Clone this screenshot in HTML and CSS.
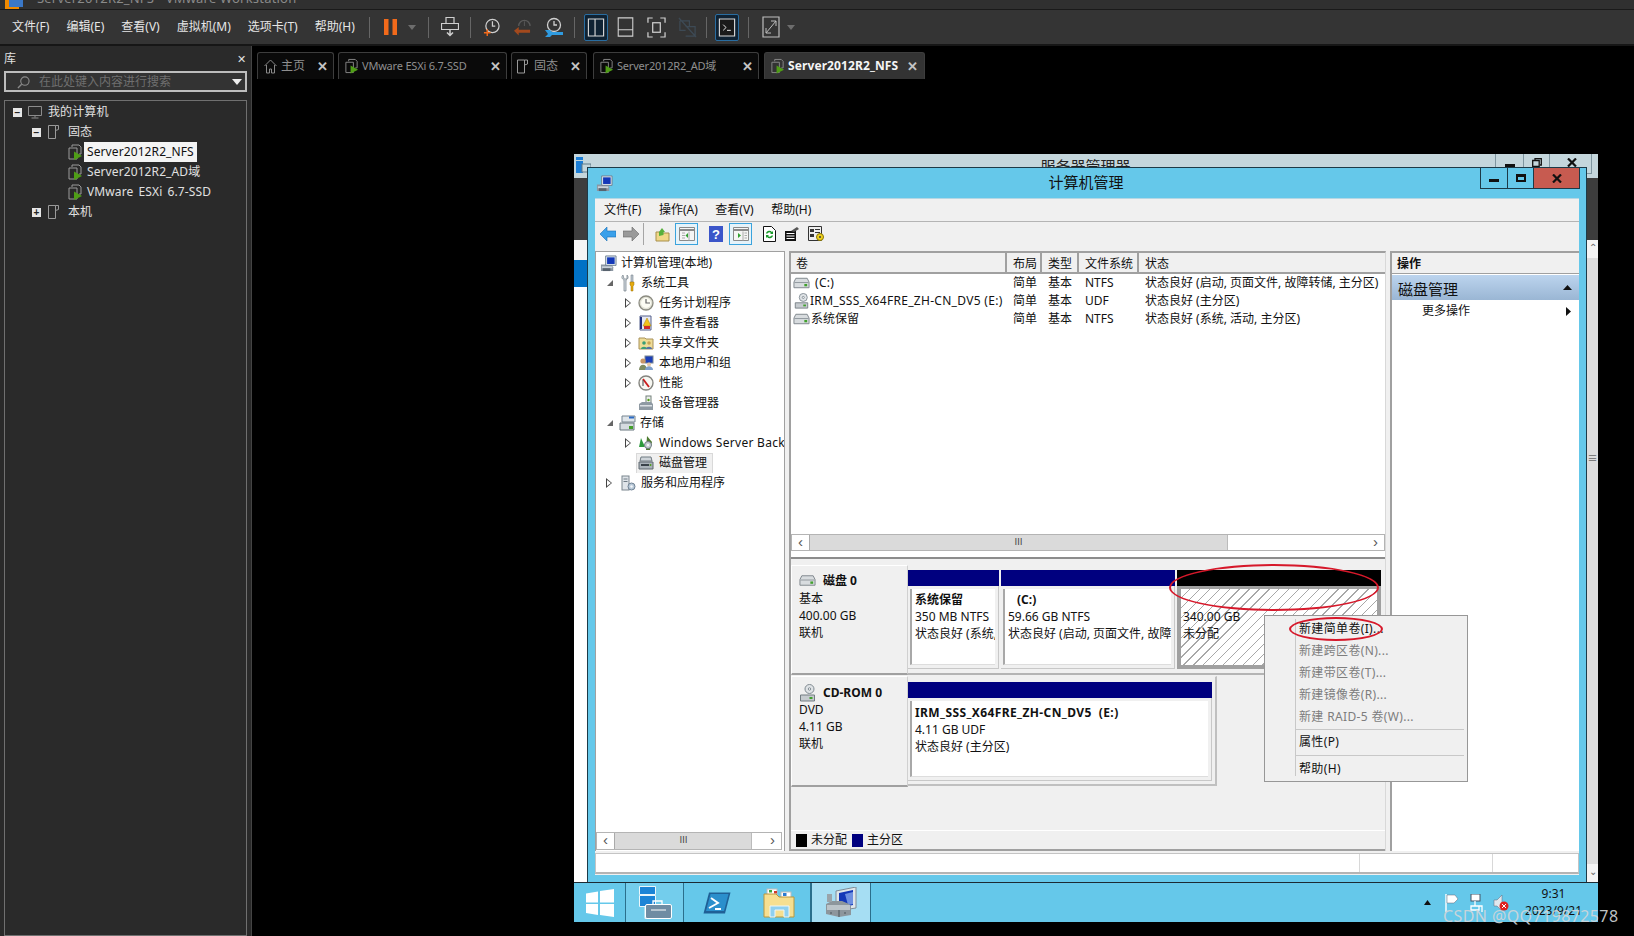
FILE: index.html
```html
<!DOCTYPE html>
<html lang="zh-CN">
<head>
<meta charset="utf-8">
<title>Server2012R2_NFS - VMware Workstation</title>
<link rel="stylesheet" href="styles.css">
</head>
<body>
<svg class="sprite" aria-hidden="true">
  <symbol id="vm" viewBox="0 0 16 16"><path d="M5 3V1h7l2 2v7h-2M2 4h8v11H2z" fill="none" stroke="#9a9a9a"/><path d="M7 7.5l8 4.5-8 4z" fill="#4f9d16"/></symbol>
  <symbol id="vmdark" viewBox="0 0 16 16"><path d="M5 3V1h7l2 2v7h-2M2 4h8v11H2z" fill="none" stroke="#8a8a8a"/><path d="M7 7.5l8 4.5-8 4z" fill="#4f9d16"/></symbol>
  <symbol id="page" viewBox="0 0 12 14"><path d="M.5.500h7v13h-7zM7.500 .5h3v4l-3 1" fill="none" stroke="#9a9a9a"/></symbol>
  <symbol id="pc" viewBox="0 0 16 16"><path d="M1.500 2.500h13v9h-13zM8 11.500v2M4.500 14h7" fill="none" stroke="#8c8c8c"/></symbol>
  <symbol id="server" viewBox="0 0 18 18"><path d="M1 10h11l2 3v4H1z" fill="#8c97a3"/><rect x="2" y="12" width="11" height="2" fill="#c9d2da"/><path d="M6 1h11v10H6z" fill="#dfe8f0" stroke="#6f7f90"/><rect x="7.500" y="2.500" width="8" height="7" fill="#1438b8"/><path d="M3 14h8v3H3z" fill="#58636e"/></symbol>
  <symbol id="tools" viewBox="0 0 14 18"><path d="M2 1c-2 2-1 4 1 5v11h2V6c2-1 3-3 1-5v4H3z" fill="#d7dee3" stroke="#717c85" stroke-width=".7"/><path d="M10 1h2v7h-2z" fill="#bcc6cf" stroke="#7a858f" stroke-width=".6"/><path d="M9 8h4v3l-1 1v5h-2v-5l-1-1z" fill="#e5ab10" stroke="#9d7206" stroke-width=".5"/></symbol>
  <symbol id="clock" viewBox="0 0 16 16"><circle cx="8" cy="8" r="7" fill="#e2e2d6" stroke="#8b8b80" stroke-width="1.300"/><circle cx="8" cy="8" r="5" fill="#fdfdf4"/><path d="M8 4v4h4" fill="none" stroke="#666" stroke-width="1.200"/></symbol>
  <symbol id="event" viewBox="0 0 16 16"><path d="M2 1h11v14H2z" fill="#e7e9f2" stroke="#55608c"/><path d="M3 2v12" stroke="#23307d" stroke-width="2"/><path d="M9 3l4 8H5z" fill="#f3c21d" stroke="#a77e00" stroke-width=".5"/><rect x="6" y="11" width="6" height="3" fill="#d02c2c"/></symbol>
  <symbol id="share" viewBox="0 0 16 16"><path d="M1 3h6l1 1h7v10H1z" fill="#efdc96" stroke="#a8915a"/><circle cx="6" cy="8" r="1.800" fill="#3a9e76"/><path d="M3 14c0-3 6-3 6 0z" fill="#3a9e76"/><circle cx="11" cy="8" r="1.800" fill="#caa352"/><path d="M8 14c0-3 6-3 6 0z" fill="#5471a5"/></symbol>
  <symbol id="users" viewBox="0 0 16 16"><rect x="7" y="1" width="8" height="7" fill="#1b3fb8" stroke="#7b8792"/><circle cx="5" cy="6" r="2.600" fill="#c69668"/><path d="M1 15c0-7 8-7 8 0z" fill="#7e8c62"/><circle cx="11" cy="9.500" r="2" fill="#e8c8a8"/><path d="M7 15c0-5 8-5 8 0z" fill="#7ea0cb"/></symbol>
  <symbol id="perf" viewBox="0 0 16 16"><circle cx="8" cy="8" r="7" fill="#f7f7f2" stroke="#84847e" stroke-width="1.400"/><path d="M5 4l6 8" stroke="#cb1d1d" stroke-width="1.800"/><path d="M5 11V5" stroke="#444"/></symbol>
  <symbol id="device" viewBox="0 0 16 16"><rect x="8" y="1" width="5" height="8" fill="#eef1ee" stroke="#73807a"/><circle cx="10.500" cy="5" r="1.200" fill="#4f9d16"/><path d="M1 9l3-2h9l2 2v6H1z" fill="#8f9aa3"/><rect x="2" y="10" width="12" height="1.500" fill="#dbe0e4"/></symbol>
  <symbol id="storage" viewBox="0 0 18 18"><path d="M3 2h13v6H3z" fill="#dfe5ea" stroke="#768590"/><rect x="10" y="2.500" width="5" height="2" fill="#2a6bc5"/><path d="M1 9h14v7H1z" fill="#d5dbe0" stroke="#69767f"/><rect x="10" y="12" width="4" height="3" fill="#44a02b"/></symbol>
  <symbol id="wsb" viewBox="0 0 16 16"><path d="M1 12l2-9 4 9z" fill="#2d9a3c"/><path d="M9 1l5 6-2 8H8z" fill="#4d7a2e"/><circle cx="10" cy="10" r="3.500" fill="#c8cfd4" stroke="#6e7a82"/><circle cx="10" cy="10" r="1" fill="#fff"/></symbol>
  <symbol id="diskmgmt" viewBox="0 0 16 16"><path d="M3 2h10l1 4H2z" fill="#ced4d9" stroke="#6f7a82"/><path d="M1 7h14v7H1z" fill="#aab3ba" stroke="#5e6970"/><rect x="3" y="9" width="8" height="2" fill="#39424a"/><circle cx="12.500" cy="10" r="1" fill="#4f9d16"/></symbol>
  <symbol id="services" viewBox="0 0 16 16"><rect x="2" y="1" width="7" height="14" fill="#dfe4e9" stroke="#7a858e"/><path d="M3.500 4h4M3.500 6.500h4" stroke="#6e7a84"/><circle cx="11.500" cy="11.500" r="3.500" fill="#b9c9d8" stroke="#6f8193"/><circle cx="11.500" cy="11.500" r="1.200" fill="#f4f7fa"/></symbol>
  <symbol id="hdd" viewBox="0 0 18 12"><path d="M3 1h12l2 4v6H1V5z" fill="#d8dcdf" stroke="#7d858b"/><path d="M1.500 5.500h15" stroke="#8f979d"/><rect x="12" y="7" width="3" height="2.500" fill="#40a02c"/></symbol>
  <symbol id="cdrom" viewBox="0 0 16 18"><circle cx="10" cy="5" r="4.500" fill="#dfe3e6" stroke="#808a91"/><circle cx="10" cy="5" r="1.200" fill="#fff" stroke="#808a91"/><path d="M1 11h14v6H1z" fill="#c6cbcf" stroke="#737c82"/><rect x="10" y="13" width="3" height="2" fill="#40a02c"/></symbol>
  <symbol id="winlogo" viewBox="0 0 28 28"><path d="M0 4.500l12-2v11H0zM14 2l14-2v13.500H14zM0 15h12v11l-12-2zM14 15h14v13l-14-2z" fill="#fff"/></symbol>
</svg>

<div class="app">
  <header class="wintitle">
    <svg class="applogo" viewBox="0 0 18 10"><rect x="0" y="0" width="14" height="10" fill="#f08a00"/><rect x="4" y="0" width="14" height="7" fill="#3a78c8"/></svg>
    <span class="wintitle-text">Server2012R2_NFS - VMware Workstation</span>
  </header>

  <nav class="vmw-menubar">
    <span class="vmw-menu">文件(F)</span>
    <span class="vmw-menu">编辑(E)</span>
    <span class="vmw-menu">查看(V)</span>
    <span class="vmw-menu">虚拟机(M)</span>
    <span class="vmw-menu">选项卡(T)</span>
    <span class="vmw-menu last">帮助(H)</span>
    <i class="vsep s-first"></i>
    <svg class="ti pause" viewBox="0 0 13 16"><path d="M0 0h4.500v16H0zM8.500 0H13v16H8.500z" fill="#f26a1b"/></svg>
    <svg class="ti ddarrow" viewBox="0 0 8 5"><path d="M0 0h8L4 5z" fill="#6d6d6d"/></svg>
    <i class="vsep s-a"></i>
    <svg class="ti send" viewBox="0 0 18 20"><path d="M5 .5h8v6H5zM.5 6.500h17v6H.5z" fill="none" stroke="#cfcfcf" stroke-width="1.200"/><path d="M9 13v5M6 15.500l3 3 3-3" fill="none" stroke="#cfcfcf" stroke-width="1.500"/></svg>
    <i class="vsep s-b"></i>
    <svg class="ti snap1" viewBox="0 0 18 20"><circle cx="10" cy="9" r="7" fill="none" stroke="#cfcfcf" stroke-width="1.300"/><path d="M10 4v5h3" fill="none" stroke="#cfcfcf" stroke-width="1.300"/><path d="M1 16h7M4.500 12.500v7" stroke="#f26a1b" stroke-width="1.500"/></svg>
    <svg class="ti snap2" viewBox="0 0 18 20"><path d="M5 9a6 6 0 0 1 12 0" fill="none" stroke="#5a5a5a" stroke-width="1.300"/><path d="M11 4v5" stroke="#5a5a5a"/><path d="M0 14l5-4v3h12v3H5v3z" fill="#a3491d"/></svg>
    <svg class="ti snap3" viewBox="0 0 18 20"><circle cx="9" cy="8" r="6.500" fill="none" stroke="#cfcfcf" stroke-width="1.300"/><path d="M9 4v4h3" fill="none" stroke="#cfcfcf" stroke-width="1.300"/><path d="M0 13h5l2 2h11v3H7l-2 2H0l3-3z" fill="#2f9be0"/></svg>
    <i class="vsep s-c"></i>
    <span class="view-btn vb-a"><svg viewBox="0 0 18 20"><path d="M1 1h16v18H1zM8 1v18" fill="none" stroke="#d8d8d8" stroke-width="1.200"/></svg></span>
    <svg class="ti view2" viewBox="0 0 18 22"><path d="M1 1h16v20H1zM1 14h16" fill="none" stroke="#d0d0d0" stroke-width="1.200"/></svg>
    <svg class="ti view3" viewBox="0 0 20 22"><path d="M1 6V1h5M14 1h5v5M19 16v5h-5M6 21H1v-5" fill="none" stroke="#d0d0d0" stroke-width="1.300"/><rect x="6" y="6" width="8" height="10" fill="none" stroke="#d0d0d0" stroke-width="1.300"/></svg>
    <svg class="ti view4" viewBox="0 0 20 22"><path d="M2 4h10v6M8 10h10v10H8M2 4v10h6M1 1l18 20" fill="none" stroke="#3d4a55" stroke-width="1.300"/></svg>
    <i class="vsep s-d"></i>
    <span class="view-btn vb-b"><svg viewBox="0 0 18 20"><path d="M1 1h16v18H1z" fill="#1a1a1a" stroke="#d8d8d8" stroke-width="1.200"/><path d="M5 7l3 3-3 3M9 13h4" fill="none" stroke="#eee"/></svg></span>
    <i class="vsep s-e"></i>
    <svg class="ti full" viewBox="0 0 18 22"><path d="M1 1h16v20H1z" fill="none" stroke="#bdbdbd" stroke-width="1.200"/><path d="M4 17L14 5M9 5h5v5M4 12v5h5" fill="none" stroke="#bdbdbd"/></svg>
    <svg class="ti ddarrow d2" viewBox="0 0 8 5"><path d="M0 0h8L4 5z" fill="#6d6d6d"/></svg>
  </nav>

  <div class="vmw-main">
    <aside class="library">
      <div class="lib-head"><span>库</span><span class="lib-x">✕</span></div>
      <div class="lib-search">
        <svg class="lib-mag" viewBox="0 0 14 14"><circle cx="8.500" cy="5.500" r="4.500" fill="none" stroke="#8a8a8a" stroke-width="1.200"/><path d="M5 9l-4 4" stroke="#8a8a8a" stroke-width="1.500"/></svg>
        <span class="lib-ph">在此处键入内容进行搜索</span>
        <svg class="lib-dd" viewBox="0 0 10 6"><path d="M0 0h10L5 6z" fill="#eee"/></svg>
      </div>
      <div class="lib-tree">
        <div class="lt-row l0"><b class="ex">−</b><svg class="lt-ic"><use href="#pc"/></svg><span>我的计算机</span></div>
        <div class="lt-row l1"><b class="ex">−</b><svg class="lt-ic pg"><use href="#page"/></svg><span>固态</span></div>
        <div class="lt-row l2"><svg class="lt-ic"><use href="#vm"/></svg><span class="sel">Server2012R2_NFS</span></div>
        <div class="lt-row l2"><svg class="lt-ic"><use href="#vm"/></svg><span>Server2012R2_AD域</span></div>
        <div class="lt-row l2"><svg class="lt-ic"><use href="#vm"/></svg><span>VMware ESXi 6.7-SSD</span></div>
        <div class="lt-row l1"><b class="ex">+</b><svg class="lt-ic pg"><use href="#page"/></svg><span>本机</span></div>
      </div>
    </aside>

    <main class="vmw-content">
      <div class="tabs">
        <div class="tab t1"><svg class="tab-ic" viewBox="0 0 14 16"><path d="M1 8l6-6 6 6M3 7v8h3v-4h2v4h3V7" fill="none" stroke="#8a8a8a"/></svg><span>主页</span><em>✕</em></div>
        <div class="tab t2"><svg class="tab-ic"><use href="#vmdark"/></svg><span class="sm">VMware ESXi 6.7-SSD</span><em>✕</em></div>
        <div class="tab t3"><svg class="tab-ic pg"><use href="#page"/></svg><span>固态</span><em>✕</em></div>
        <div class="tab t4"><svg class="tab-ic"><use href="#vmdark"/></svg><span class="sm">Server2012R2_AD域</span><em>✕</em></div>
        <div class="tab t5 current"><svg class="tab-ic"><use href="#vmdark"/></svg><span>Server2012R2_NFS</span><em>✕</em></div>
      </div>

      <div class="stage">
        <div class="vm-screen">
          <div class="srv-top">
            <svg class="srv-logo" viewBox="0 0 15 16"><rect x="0" y="0" width="7" height="3" fill="#1c7ed6"/><rect x="0" y="4" width="7" height="12" fill="#1c7ed6"/><rect x="6" y="7" width="9" height="8" fill="#c4d6dc" stroke="#5e7a88"/></svg>
            <span class="srv-title">服务器管理器</span>
            <div class="srv-btns">
              <span class="sb sb-min"><i></i></span>
              <span class="sb sb-max"><svg viewBox="0 0 10 9"><path d="M3 2V.7h6.300V7H8M.7 2.500h6.500v6H.7z" fill="none" stroke="#111" stroke-width="1.300"/></svg></span>
              <span class="sb sb-close"><svg viewBox="0 0 10 9"><path d="M1 .5l8 8M9 .5l-8 8" stroke="#111" stroke-width="2.200"/></svg></span>
            </div>
          </div>
          <div class="srv-body">
            <div class="srv-left"><i class="sl-dark"></i><i class="sl-white"></i><i class="sl-blue"></i></div>
            <div class="srv-mid"></div>
            <div class="srv-right">
              <i class="sr-dark"></i><i class="sr-up">⌃</i><i class="sr-track">≡</i><i class="sr-dn">⌄</i>
            </div>
          </div>

          <section class="taskbar">
            <div class="tk start"><svg class="tk-win"><use href="#winlogo"/></svg></div>
            <div class="tk srvm">
              <svg class="tk-ic i-srv" viewBox="0 0 33 33"><path d="M.5.500h16v8H.5zM.5 9.500h16v11H.5zM6 20.500h2v12H6z" fill="#1c84d6" stroke="#eaf6fb"/><path d="M14 18v-3h9v3" fill="none" stroke="#fff" stroke-width="1.300"/><rect x="6.500" y="18.500" width="26" height="14" rx="1.500" fill="#6f8ca3" stroke="#fff"/><path d="M12 24h15" stroke="#fff"/></svg>
            </div>
            <div class="tk ps">
              <svg class="tk-ic i-ps" viewBox="0 0 28 22"><path d="M6 .5h21.500L22 21.500H.5z" fill="#1f6096"/><path d="M7.500 2h18L21 19H3z" fill="#2b8fcc"/><path d="M8 6l7 5-9 5M12 17h6" fill="none" stroke="#fff" stroke-width="1.900"/></svg>
              <svg class="tk-ic i-ex" viewBox="0 0 32 30"><rect x="4" y="1" width="10" height="8" fill="#fff" stroke="#bbb"/><rect x="6" y="2" width="3" height="2.500" fill="#3aa83a"/><rect x="11" y="3" width="3" height="2.500" fill="#d23a2a"/><rect x="18" y="4" width="10" height="8" fill="#fff" stroke="#bbb"/><rect x="20" y="5" width="3.500" height="3" fill="#2a7bd2"/><path d="M1 6h12l3 3h15v20H1z" fill="#f6df90" stroke="#b8973e"/><path d="M7 29V18h19v11h-5v-7H12v7z" fill="#8fd0ef" stroke="#eaf6fb"/></svg>
            </div>
            <div class="tk sel">
              <svg class="tk-ic i-cm" viewBox="0 0 32 30"><path d="M11 4L31 0v21l-20 3z" fill="#dfe6ea" stroke="#7e8d98"/><path d="M14 6l14-3v15l-14 3z" fill="#1438b8"/><path d="M20 7l8-2v12l-5 1z" fill="#6d8fe0"/><path d="M1 17l6-3h10l7 3 2 2v9l-12 2-13-3z" fill="#8d969c"/><path d="M2 18h23v5H2z" fill="#bcc4c9"/><path d="M14 23v7M6 25v2M20 25v2" stroke="#5a646a" stroke-width="1.300"/><rect x="2" y="7" width="5" height="8" fill="#9aa4aa"/></svg>
            </div>
            <div class="tk-fill"></div>
            <div class="tray">
              <svg class="tr-up" viewBox="0 0 7 5"><path d="M0 5h7L3.500 0z" fill="#111"/></svg>
              <svg class="tr-flag" viewBox="0 0 14 18"><path d="M1 0v18" stroke="#fff" stroke-width="1.400"/><path d="M2 1h8l3 4-4 4H2z" fill="#fff" stroke="#667"  stroke-width=".5"/></svg>
              <svg class="tr-net" viewBox="0 0 14 18"><rect x="1" y="0" width="9" height="7" fill="#fff" stroke="#456"/><path d="M5 7v5h7v6M1 12h8v4H1z" fill="none" stroke="#fff" stroke-width="1.300"/></svg>
              <svg class="tr-vol" viewBox="0 0 16 18"><path d="M1 6h3l5-5v16L4 12H1z" fill="#e0e8ee" stroke="#667"  stroke-width=".5"/><circle cx="11" cy="12" r="4.500" fill="#e02020"/><path d="M9 10l4 4M13 10l-4 4" stroke="#fff"/></svg>
              <div class="tr-time"><span>9:31</span><span>2023/9/21</span></div>
            </div>
          </section>

          <section class="mmc">
            <div class="mmc-title">
              <svg class="mmc-ic"><use href="#server"/></svg>
              <span class="mmc-name">计算机管理</span>
              <div class="mmc-btns">
                <span class="mb min"><i></i></span>
                <span class="mb max"><i></i></span>
                <span class="mb close">
                  <svg viewBox="0 0 10 9"><path d="M1 .5l8 8M9 .5l-8 8" stroke="#111" stroke-width="2.200"/></svg>
                </span>
              </div>
            </div>
            <div class="client">
              <div class="mmc-menu"><span>文件(F)</span><span>操作(A)</span><span>查看(V)</span><span>帮助(H)</span></div>
              <div class="mmc-tools">
                <svg class="mt back" viewBox="0 0 16 14"><path d="M0 7l7-7v4h9v6H7v4z" fill="#3aa0ea" stroke="#1a6fb5" stroke-width=".6"/></svg>
                <svg class="mt fwd" viewBox="0 0 16 14"><path d="M16 7L9 0v4H0v6h9v4z" fill="#9a9a9a" stroke="#666" stroke-width=".6"/></svg>
                <i class="mt-sep"></i>
                <svg class="mt up" viewBox="0 0 15 15"><path d="M1 5h5l1 1h7v8H1z" fill="#f0d888" stroke="#a88f4c"/><path d="M4 9V5l3-4 3 4H8.500v3z" fill="#57b03c"/></svg>
                <span class="mt-btn b1"><svg viewBox="0 0 16 14"><path d="M.5.500h15v13H.5z" fill="#f5f5f5" stroke="#8a8a8a"/><path d="M1 3h14" stroke="#8a8a8a" stroke-width="2"/><path d="M10 4.500v9M3 6h3M3 8.500h3M3 11h3" stroke="#aaa"/><path d="M9 6L6.500 8.500 9 11z" fill="#2fa02f"/></svg></span>
                <svg class="mt help" viewBox="0 0 14 16"><rect width="14" height="16" fill="#3b55c9"/><text x="7" y="13" text-anchor="middle" class="help-q">?</text></svg>
                <span class="mt-btn b2"><svg viewBox="0 0 16 14"><path d="M.5.500h15v13H.5z" fill="#f5f5f5" stroke="#8a8a8a"/><path d="M1 3h14" stroke="#8a8a8a" stroke-width="2"/><path d="M10 4.500v9M11.500 6h2.500M11.500 8.500h2.500M11.500 11h2.500" stroke="#aaa"/><path d="M5 6l3 2.500L5 11z" fill="#2fa02f"/></svg></span>
                <svg class="mt refresh" viewBox="0 0 13 16"><path d="M.5.500h8l4 4v11H.5z" fill="#fff" stroke="#111"/><path d="M3 7a3.500 3.500 0 0 1 6-1l1-1v3H7l1-1a2.500 2.500 0 0 0-4 1zM10 10a3.500 3.500 0 0 1-6 1l-1 1V9h3l-1 1a2.500 2.500 0 0 0 4-1z" fill="#1a9a2a"/></svg>
                <svg class="mt props" viewBox="0 0 16 16"><path d="M1 5h11v10H1z" fill="#111"/><path d="M2.500 7.500h8M2.500 10h8M2.500 12.500h8" stroke="#fff"/><path d="M7 5l6-4 2 2-5 3z" fill="#555"/></svg>
                <svg class="mt opts" viewBox="0 0 17 16"><path d="M.5.500h13v14H.5z" fill="#eee" stroke="#333"/><path d="M2 3h4v3H2zM7 3h5v1H7zM2 8h4v3H2zM7 6h5v1H7z" fill="#333"/><circle cx="12" cy="11" r="3.500" fill="#efd21f" stroke="#8a7500"/><circle cx="12" cy="11" r="1.100" fill="#444"/></svg>
              </div>

              <div class="panes">
                <div class="pane-tree">
                  <ul class="tree">
                    <li class="root"><svg class="ic i16"><use href="#server"/></svg><span>计算机管理(本地)</span></li>
                    <li class="lv1 open"><svg class="ic i-t"><use href="#tools"/></svg><span>系统工具</span></li>
                    <li class="lv2 closed"><svg class="ic"><use href="#clock"/></svg><span>任务计划程序</span></li>
                    <li class="lv2 closed"><svg class="ic"><use href="#event"/></svg><span>事件查看器</span></li>
                    <li class="lv2 closed"><svg class="ic"><use href="#share"/></svg><span>共享文件夹</span></li>
                    <li class="lv2 closed"><svg class="ic"><use href="#users"/></svg><span>本地用户和组</span></li>
                    <li class="lv2 closed"><svg class="ic"><use href="#perf"/></svg><span>性能</span></li>
                    <li class="lv2"><svg class="ic"><use href="#device"/></svg><span>设备管理器</span></li>
                    <li class="lv1 open"><svg class="ic i-st"><use href="#storage"/></svg><span>存储</span></li>
                    <li class="lv2 closed"><svg class="ic"><use href="#wsb"/></svg><span class="lat">Windows Server Back</span></li>
                    <li class="lv2 picked"><svg class="ic"><use href="#diskmgmt"/></svg><span>磁盘管理</span></li>
                    <li class="lv1 closed"><svg class="ic"><use href="#services"/></svg><span>服务和应用程序</span></li>
                  </ul>
                  <div class="hscroll hs-tree"><b class="ar">‹</b><div class="thumb">Ⅲ</div><i class="rest"></i><b class="ar">›</b></div>
                </div>

                <div class="pane-mid">
                  <div class="vol-list">
                    <div class="vl-head">
                      <span class="c-vol">卷</span><span class="c-lay">布局</span><span class="c-typ">类型</span><span class="c-fs">文件系统</span><span class="c-st">状态</span>
                    </div>
                    <div class="vl-row"><span class="c-vol"><svg class="vl-ic"><use href="#hdd"/></svg><span class="vl-c">(C:)</span></span><span class="c-lay">简单</span><span class="c-typ">基本</span><span class="c-fs">NTFS</span><span class="c-st">状态良好 (启动, 页面文件, 故障转储, 主分区)</span></div>
                    <div class="vl-row"><span class="c-vol"><svg class="vl-ic cd"><use href="#cdrom"/></svg><span class="lat">IRM_SSS_X64FRE_ZH-CN_DV5 (E:)</span></span><span class="c-lay">简单</span><span class="c-typ">基本</span><span class="c-fs">UDF</span><span class="c-st">状态良好 (主分区)</span></div>
                    <div class="vl-row"><span class="c-vol"><svg class="vl-ic"><use href="#hdd"/></svg><span>系统保留</span></span><span class="c-lay">简单</span><span class="c-typ">基本</span><span class="c-fs">NTFS</span><span class="c-st">状态良好 (系统, 活动, 主分区)</span></div>
                    <div class="vl-fill"></div>
                    <div class="hscroll hs-list"><b class="ar">‹</b><div class="thumb">Ⅲ</div><i class="rest"></i><b class="ar">›</b></div>
                  </div>

                  <div class="disks">
                    <div class="disk-row d0">
                      <div class="disk-label">
                        <div class="dl-name"><svg class="dl-ic"><use href="#hdd"/></svg><b>磁盘 0</b></div>
                        <div>基本</div><div>400.00 GB</div><div>联机</div>
                      </div>
                      <div class="parts">
                        <div class="part p1"><i class="bar prim"></i><div class="pbox"><div class="pin"><b>系统保留</b><span>350 MB NTFS</span><span>状态良好 (系统, 活动, 主分区)</span></div></div></div>
                        <div class="part p2"><i class="bar prim"></i><div class="pbox"><div class="pin"><b class="ind">(C:)</b><span>59.66 GB NTFS</span><span>状态良好 (启动, 页面文件, 故障转储, 主分区)</span></div></div></div>
                        <div class="part p3"><i class="bar unalloc"></i><div class="pbox hatch"><div class="pin"><b>&nbsp;</b><span>340.00 GB</span><span>未分配</span></div></div></div>
                      </div>
                    </div>
                    <div class="disk-row d1">
                      <div class="disk-label">
                        <div class="dl-name"><svg class="dl-ic"><use href="#cdrom"/></svg><b>CD-ROM 0</b></div>
                        <div>DVD</div><div>4.11 GB</div><div>联机</div>
                      </div>
                      <div class="parts">
                        <div class="part p4"><i class="bar prim"></i><div class="pbox"><div class="pin"><b class="lat4">IRM_SSS_X64FRE_ZH-CN_DV5&nbsp;&nbsp;(E:)</b><span>4.11 GB UDF</span><span>状态良好 (主分区)</span></div></div></div>
                      </div>
                    </div>
                  </div>
                  <div class="legend"><i class="sw black"></i><span>未分配</span><i class="sw navy"></i><span>主分区</span></div>
                </div>

                <div class="pane-act">
                  <div class="act-head">操作</div>
                  <div class="act-band"><span>磁盘管理</span><svg viewBox="0 0 9 5"><path d="M0 5h9L4.500 0z" fill="#111"/></svg></div>
                  <div class="act-item"><span>更多操作</span><svg viewBox="0 0 5 9"><path d="M0 0v9l5-4.500z" fill="#111"/></svg></div>
                </div>
              </div>

              <div class="statusbar"><i></i><i></i><i></i></div>
            </div>
          </section>

          <div class="ctx">
            <div class="cx-item">新建简单卷(I)...</div>
            <div class="cx-item off">新建跨区卷(N)...</div>
            <div class="cx-item off">新建带区卷(T)...</div>
            <div class="cx-item off">新建镜像卷(R)...</div>
            <div class="cx-item off">新建 RAID-5 卷(W)...</div>
            <div class="cx-sep tight"></div>
            <div class="cx-item">属性(P)</div>
            <div class="cx-sep"></div>
            <div class="cx-item">帮助(H)</div>
          </div>
          <i class="ring big"></i>
          <i class="ring small"></i>
        </div>
        <div class="watermark">CSDN @QQ719872578</div>
      </div>
    </main>
  </div>
</div>
</body>
</html>
```

FILE: styles.css
```css
* { box-sizing: border-box; }
html, body { margin: 0; padding: 0; height: 936px; background: #000; overflow: hidden; }
body { font: 12px/1.2 "Noto Sans", "Noto Sans CJK SC", sans-serif; color: #111; }
i, em { font-style: normal; display: block; }
ul { list-style: none; margin: 0; padding: 0; }
.sprite { display: none; }

.app { width: 1634px; height: 936px; display: flex; flex-direction: column; background: #000; overflow: hidden; }

/* title bar */
.wintitle { height: 10px; background: #303030; display: flex; overflow: hidden; border-bottom: 1px solid #1a1a1a; flex: none; }
.applogo { width: 18px; height: 10px; margin-left: 5px; }
.wintitle-text { color: #8a8a8a; font-size: 13px; line-height: 14px; margin: -9px 0 0 14px; letter-spacing: .2px; }

/* VMware menubar */
.vmw-menubar { height: 36px; background: #343434; border-bottom: 2px solid #161616; padding-left: 12px; display: flex; align-items: center; color: #e6e6e6; flex: none; }
.vmw-menu { margin-right: 17px; flex: none; }
.vmw-menu.last { margin-right: 0; }
.vsep { width: 1px; height: 21px; background: #666; flex: none; }
.ti { flex: none; display: block; }
.s-first { margin-left: 14px; }
.pause { width: 13px; height: 16px; margin-left: 14px; }
.ddarrow { width: 8px; height: 5px; margin-left: 11px; }
.s-a { margin-left: 12px; }
.send { width: 18px; height: 20px; margin-left: 12px; }
.s-b { margin-left: 11px; }
.snap1 { width: 17px; height: 20px; margin-left: 12px; }
.snap2 { width: 17px; height: 20px; margin-left: 14px; }
.snap3 { width: 18px; height: 20px; margin-left: 14px; }
.s-c { margin-left: 11px; }
.view-btn { width: 24px; height: 27px; border: 1px solid #2a6da0; background: #0f2233; border-radius: 2px; display: flex; padding: 3px 2px; flex: none; }
.view-btn svg { width: 100%; height: 100%; }
.vb-a { margin-left: 9px; }
.view2 { width: 17px; height: 20px; margin-left: 9px; }
.view3 { width: 19px; height: 21px; margin-left: 13px; }
.view4 { width: 19px; height: 21px; margin-left: 12px; }
.s-d { margin-left: 9px; }
.vb-b { margin-left: 8px; }
.s-e { margin-left: 9px; }
.full { width: 18px; height: 22px; margin-left: 13px; }
.d2 { margin-left: 7px; }

.vmw-main { flex: 1; display: flex; min-height: 0; }

/* Library */
.library { width: 252px; background: #2a2a2a; border-right: 1px solid #444; padding: 0 4px; display: flex; flex-direction: column; color: #e0e0e0; flex: none; }
.lib-head { height: 25px; display: flex; justify-content: space-between; align-items: center; padding: 1px 1px 0 0; flex: none; }
.lib-x { font-size: 11px; }
.lib-search { height: 21px; border: 2px solid #bdbdbd; background: #333; display: flex; align-items: center; padding: 1px 3px 0 11px; width: 243px; flex: none; }
.lib-mag { width: 13px; height: 13px; flex: none; }
.lib-ph { color: #6f6f6f; margin-left: 9px; flex: 1; }
.lib-dd { width: 10px; height: 6px; flex: none; }
.lib-tree { margin-top: 8px; border: 1px solid #707070; flex: 1; padding-top: 1px; width: 243px; word-spacing: 2px; letter-spacing: .1px; }
.lt-row { height: 20px; display: flex; align-items: center; white-space: nowrap; }
.ex { width: 9px; height: 9px; background: #e6e6e6; color: #222; font: bold 10px/9px "Liberation Sans", sans-serif; text-align: center; flex: none; }
.lt-ic { width: 16px; height: 16px; flex: none; margin-right: 5px; }
.lt-ic.pg { width: 12px; height: 14px; margin: 0 8px 0 1px; }
.l0 { padding-left: 8px; }
.l0 .ex { margin-right: 5px; }
.l1 { padding-left: 27px; }
.l1 .ex { margin-right: 6px; }
.l2 { padding-left: 62px; }
.l2 .lt-ic { margin-right: 1px; }
.l2 span { padding: 0 3px; height: 20px; line-height: 20px; }
.lt-row .sel { background: #f4f4f4; color: #111; }

/* Content / tabs */
.vmw-content { flex: 1; display: flex; flex-direction: column; min-width: 0; background: #000; }
.tabs { height: 33px; padding-top: 6px; display: flex; padding-left: 5px; flex: none; }
.tab { height: 27px; border: 1px solid #3d3d3d; border-bottom: none; border-radius: 3px 3px 0 0; background: #0a0a0a; display: flex; align-items: center; color: #8f8f8f; padding: 0 4px 0 5px; flex: none; white-space: nowrap; }
.tab em { margin-left: auto; color: #c4c4c4; font-size: 13px; line-height: 14px; font-weight: bold; width: 14px; text-align: center; }
.tab-ic { width: 15px; height: 16px; margin-right: 3px; flex: none; }
.tab-ic.pg { width: 12px; height: 15px; margin-right: 5px; }
.sm { font-size: 11px; letter-spacing: -.2px; }
.t1 { width: 77px; margin-right: 4px; }
.t2 { width: 169px; margin-right: 4px; }
.t3 { width: 76px; margin-right: 6px; }
.t4 { width: 166px; margin-right: 5px; }
.t5 { width: 161px; padding-right: 4px; }
.current { background: #333; color: #f5f5f5; font-weight: bold; font-size: 12px; letter-spacing: .1px; }

.stage { flex: 1; position: relative; }
.watermark { position: absolute; left: 1191px; top: 828px; color: #d2d6d9; font-size: 16px; letter-spacing: .4px; opacity: .9; white-space: nowrap; }

/* VM desktop */
.vm-screen { position: absolute; left: 322px; top: 75px; width: 1024px; height: 768px; background: #fff; display: flex; flex-direction: column; }
.srv-top { height: 24px; background: #c4d6dc; position: relative; display: flex; justify-content: center; flex: none; }
.srv-logo { position: absolute; left: 2px; top: 3px; width: 15px; height: 16px; }
.srv-title { font-size: 15px; color: #222; padding-top: 2px; margin-right: 1px; line-height: 20px; }
.srv-btns { position: absolute; right: 6px; top: 0; display: flex; height: 20px; border-left: 1px solid #7f96a0; }
.sb { border-right: 1px solid #7f96a0; border-bottom: 1px solid #7f96a0; display: flex; justify-content: center; align-items: flex-start; padding-top: 4px; }
.sb-min { width: 28px; }
.sb-min i { width: 10px; height: 3px; background: #111; margin-top: 6px; }
.sb-max { width: 26px; }
.sb-max svg { width: 10px; height: 9px; }
.sb-close { width: 42px; padding-left: 3px; }
.sb-close svg { width: 10px; height: 9px; }
.srv-body { flex: 1; display: flex; min-height: 0; }
.srv-left { width: 13px; display: flex; flex-direction: column; }
.sl-dark { height: 62px; background: #3d3d3d; }
.sl-white { height: 20px; background: #f4f4f4; }
.sl-blue { height: 27px; background: #0072c6; }
.srv-mid { flex: 1; }
.srv-right { width: 11px; display: flex; flex-direction: column; background: #ddd; color: #666; text-align: center; font-size: 10px; line-height: 14px; }
.sr-dark { height: 62px; background: #3d3d3d; }
.sr-up { height: 18px; background: #f4f4f4; }
.sr-track { flex: 1; padding-top: 193px; }
.sr-dn { height: 18px; background: #f4f4f4; }

/* taskbar */
.taskbar { height: 40px; flex: none; background: #65c8ea; border-top: 1px solid #1c2a33; display: flex; }
.tk { height: 39px; border-right: 1px solid #2a6f8c; display: flex; align-items: center; flex: none; }
.start { width: 52px; padding-left: 12px; }
.tk-win { width: 28px; height: 28px; }
.srvm { width: 58px; padding-left: 13px; background: #73cdec; }
.i-srv { width: 33px; height: 33px; }
.ps { width: 127px; padding-left: 19px; background: #65c8ea; }
.i-ps { width: 28px; height: 22px; }
.i-ex { width: 32px; height: 30px; margin-left: 32px; }
.tk.sel { width: 60px; background: #a6def3; border-left: 1px solid #2a6f8c; padding-left: 13px; }
.i-cm { width: 32px; height: 30px; margin-top: -2px; }
.tk-fill { flex: 1; }
.tray { display: flex; align-items: center; padding-right: 16px; }
.tr-up { width: 7px; height: 5px; margin-right: 14px; }
.tr-flag { width: 14px; height: 18px; margin-right: 11px; }
.tr-net { width: 14px; height: 18px; margin-right: 9px; }
.tr-vol { width: 16px; height: 18px; margin-right: 16px; }
.tr-time { display: flex; flex-direction: column; align-items: center; gap: 2px; font-size: 12px; color: #111; line-height: 15px; margin-top: -1px; }

/* MMC window */
.mmc { position: absolute; left: 13px; top: 13px; width: 1000px; height: 715px; background: #65c8ea; border: 1px solid #1c3a48; border-bottom: none; display: flex; flex-direction: column; padding: 0 7px 7px; }
.mmc-title { height: 30px; display: flex; align-items: flex-start; position: relative; flex: none; justify-content: center; }
.mmc-ic { position: absolute; left: 1px; top: 7px; width: 17px; height: 17px; }
.mmc-name { font-size: 15px; line-height: 20px; padding-top: 4px; color: #111; margin-right: 2px; }
.mmc-btns { position: absolute; right: -1px; top: -1px; display: flex; height: 22px; border: 1px solid #1c3a48; }
.mb { height: 20px; display: flex; align-items: center; justify-content: center; border-right: 1px solid #1c3a48; }
.min { width: 27px; }
.min i { width: 10px; height: 3px; background: #111; margin-top: 5px; }
.max { width: 26px; }
.max i { width: 10px; height: 8px; border: 2px solid #111; border-top-width: 3px; margin-top: -1px; }
.close { width: 45px; background: #c75b50; border-right: none; }
.close svg { width: 10px; height: 9px; }

.client { flex: 1; background: #f0f0f0; display: flex; flex-direction: column; min-height: 0; border-top: 1px solid #b5d7e4; }
.mmc-menu { height: 23px; border-bottom: 1px solid #b4b4b4; display: flex; align-items: center; padding-left: 9px; gap: 17.500px; flex: none; }
.mmc-tools { height: 29px; display: flex; align-items: center; flex: none; padding: 0 0 5px 5px; }
.mt { flex: none; display: block; }
.back { width: 16px; height: 14px; }
.fwd { width: 16px; height: 14px; margin-left: 7px; }
.mt-sep { width: 1px; height: 22px; background: #a5a5a5; margin-left: 4px; flex: none; }
.up { width: 15px; height: 15px; margin-left: 11px; }
.mt-btn { width: 23px; height: 22px; border: 1px solid #3aa3dd; background: #e6f3fa; display: flex; align-items: center; justify-content: center; flex: none; }
.mt-btn svg { width: 16px; height: 14px; }
.b1 { margin-left: 5px; }
.help { width: 14px; height: 16px; margin-left: 11px; }
.help-q { fill: #fff; font: bold 13px "Liberation Sans", sans-serif; }
.b2 { margin-left: 6px; }
.refresh { width: 13px; height: 16px; margin-left: 11px; }
.props { width: 16px; height: 16px; margin-left: 8px; }
.opts { width: 17px; height: 16px; margin-left: 8px; }

.panes { height: 600px; display: flex; flex: none; }
.pane-tree { width: 190px; background: #fff; border-top: 1px solid #a0a0a0; border-left: 1px solid #a0a0a0; border-right: 1px solid #a0a0a0; display: flex; flex-direction: column; overflow: hidden; flex: none; }
.tree { flex: 1; white-space: nowrap; overflow: hidden; padding-top: 1px; }
.tree li { height: 20px; display: flex; align-items: center; position: relative; z-index: 0; width: 188px; overflow: hidden; }
.tree .ic { width: 16px; height: 16px; flex: none; margin-right: 5px; }
.tree .i16 { width: 17px; height: 17px; margin-right: 4px; }
.tree .i-t { width: 14px; height: 18px; margin: 0 6px 0 1px; }
.tree .i-st { width: 18px; height: 18px; margin: 0 3px 0 -1px; }
.root { padding-left: 4px; }
.lv1 { padding-left: 24px; }
.lv2 { padding-left: 42px; }
.lat { letter-spacing: .3px; }
.open::before, .closed::before, .closed::after { content: ""; position: absolute; width: 0; height: 0; }
.lv1.open::before { left: 11px; top: 7px; border-style: solid; border-width: 0 0 6px 6px; border-color: transparent transparent #666 transparent; }
.closed::before { border-style: solid; border-width: 5px 0 5px 6px; border-color: transparent transparent transparent #444; top: 5px; }
.closed::after { border-style: solid; border-width: 3.500px 0 3.500px 4px; border-color: transparent transparent transparent #fff; top: 6.500px; }
.lv1.closed::before { left: 10px; }
.lv1.closed::after { left: 11px; }
.lv2.closed::before { left: 29px; }
.lv2.closed::after { left: 30px; }
.picked::after { content: ""; position: absolute; left: 40px; top: 0; width: 75px; height: 20px; background: #f0f0f0; border: 1px solid #d9d9d9; z-index: -1; }
.hscroll { display: flex; align-items: stretch; background: #fff; border: 1px solid #b4b4b4; flex: none; color: #555; }
.hscroll .ar { width: 17px; text-align: center; font: 15px/13px "Liberation Sans", sans-serif; flex: none; }
.hscroll .thumb { background: #dadada; border-left: 1px solid #aaa; border-right: 1px solid #bbb; text-align: center; font: 9px/15px "Liberation Sans", sans-serif; color: #444; flex: none; }
.hscroll .rest { flex: 1; }
.hs-tree { height: 18px; margin: 0 2px 1px 0; }
.hs-tree .thumb { width: 138px; }
.hs-list { height: 17px; margin-bottom: 6px; }
.hs-list .thumb { width: 419px; }

.pane-mid { width: 597px; margin-left: 4px; border-top: 2px solid #a0a0a0; border-left: 2px solid #a0a0a0; border-right: 1px solid #d8d8d8; display: flex; flex-direction: column; background: #f0f0f0; flex: none; }
.vol-list { height: 306px; background: #fff; display: flex; flex-direction: column; border-bottom: 2px solid #8c8c8c; flex: none; }
.vl-head { height: 21px; background: #f0f0f0; display: flex; border-bottom: 2px solid #a0a0a0; flex: none; }
.vl-head span { border-right: 2px solid #a0a0a0; padding: 4px 0 0 6px; }
.vl-head span:last-child { border-right: none; }
.c-vol { width: 216px; flex: none; white-space: nowrap; display: flex; align-items: center; }
.vl-head .c-vol { align-items: flex-start; padding-left: 5px; }
.c-lay { width: 35px; flex: none; }
.c-typ { width: 37px; flex: none; }
.c-fs { width: 60px; flex: none; }
.c-st { flex: 1; white-space: nowrap; }
.vl-row { height: 18px; display: flex; align-items: center; flex: none; }
.vl-row span.c-lay, .vl-row span.c-typ, .vl-row span.c-fs, .vl-row span.c-st { padding-left: 6px; }
.vl-row .c-vol { padding-left: 2px; }
.vl-ic { width: 17px; height: 12px; margin-right: 1px; flex: none; }
.vl-ic.cd { height: 16px; margin-right: 0; }
.vl-c { padding-left: 4px; letter-spacing: .3px; }
.vl-fill { flex: 1; }

.disks { flex: 1; padding-top: 6px; display: flex; flex-direction: column; min-height: 0; }
.disk-row { display: flex; flex: none; }
.d0 { height: 110px; }
.d1 { height: 111px; margin-top: 1px; }
.disk-label { width: 117px; background: #f0f0f0; border: 1px solid #fff; border-right: 1px solid #d0d0d0; border-bottom: 2px solid #a0a0a0; padding: 7px 0 0 7px; line-height: 17px; flex: none; }
.d0 .disk-label { padding-top: 6px; }
.dl-name { display: flex; align-items: center; height: 17px; }
.d0 .dl-name { margin-bottom: 1px; }
.dl-ic { width: 17px; height: 13px; margin-right: 7px; flex: none; }
.d1 .dl-ic { height: 18px; }
.parts { display: flex; flex: none; padding-top: 5px; border-bottom: 2px solid #b4b4b4; gap: 2px; align-self: flex-start; }
.d0 .parts { height: 110px; }
.d1 .parts { height: 110px; border: 2px solid #c0c0c0; border-top: 1px solid #f0f0f0; border-left: none; padding-right: 3px; }
.part { display: flex; flex-direction: column; flex: none; }
.bar { height: 16px; flex: none; }
.prim { background: #00007f; }
.unalloc { background: #000; }
.p1 { width: 91px; }
.p2 { width: 174px; }
.p3 { width: 204px; }
.p4 { width: 304px; }
.pbox { flex: 1; margin-bottom: 4px; padding: 3px 3px 3px 2px; background: #f0f0f0; border-right: 1px solid #c8c8c8; border-bottom: 1px solid #c8c8c8; overflow: hidden; }
.pin { height: 100%; background: #fff; border-left: 2px solid #a8a8a8; border-bottom: 1px solid #ddd; padding: 3px 0 0 3px; line-height: 17px; overflow: hidden; white-space: nowrap; }
.d0 .pin { padding-top: 2px; }
.pin b, .pin span { display: block; }
.ind { padding-left: 9px; }
.lat4 { letter-spacing: .4px; }
.hatch { padding: 0; border: 4px solid #a0a0a0; border-top-width: 3px; }
.hatch .pin { background: repeating-linear-gradient(135deg, #fff 0 6px, #a8a8a8 6px 7px); border: none; padding-left: 2px; }
.p4 .pbox { margin-bottom: 3px; }

.legend { height: 21px; background: #f0f0f0; border-top: 1px solid #fff; border-bottom: 2px solid #a0a0a0; display: flex; align-items: center; padding-left: 5px; flex: none; }
.sw { width: 11px; height: 13px; margin-right: 4px; flex: none; }
.black { background: #000; }
.navy { background: #00007f; margin-left: 5px; }

.pane-act { width: 189px; margin-left: 4px; background: #fff; border-top: 2px solid #a0a0a0; border-left: 2px solid #a0a0a0; flex: none; }
.act-head { height: 21px; background: #f0f0f0; border-bottom: 1px solid #a0a0a0; font-weight: bold; padding: 4px 0 0 5px; }
.act-band { height: 25px; margin-top: 1px; background: linear-gradient(#bcd4ee, #9ab6d4); display: flex; align-items: center; justify-content: space-between; padding: 2px 7px 0 6px; font-size: 15px; }
.act-band svg { width: 9px; height: 5px; margin-top: -2px; }
.act-item { height: 22px; display: flex; align-items: center; justify-content: space-between; padding: 1px 8px 0 30px; }
.act-item svg { width: 5px; height: 9px; }

.statusbar { height: 21px; margin-top: 2px; background: #fff; border: 1px solid #c4c4c4; border-bottom: 2px solid #b4b4b4; display: flex; justify-content: flex-end; flex: none; }
.statusbar i { width: 133px; border-left: 1px solid #d8d8d8; }
.statusbar i:last-child { width: 86px; }
.statusbar i:first-child { display: none; }

/* context menu */
.ctx { position: absolute; left: 690px; top: 461px; width: 204px; height: 167px; background: #f0f0f0; border: 1px solid #979797; padding: 2px 3px 0 30px; color: #111; }
.ctx::before { content: ""; position: absolute; left: 30px; top: 3px; bottom: 5px; width: 1px; background: #c8c8c8; }
.cx-item { height: 22px; line-height: 21px; padding-left: 4px; letter-spacing: .35px; }
.off { color: #7d7d7d; }
.cx-sep { height: 1px; background: #c8c8c8; margin: 2px 0; }
.cx-sep.tight { margin: 1px 0; }

.ring { position: absolute; border: 2px solid #d6182a; border-radius: 50%; }
.big { left: 595px; top: 410px; width: 210px; height: 47px; }
.small { left: 715px; top: 463px; width: 94px; height: 24px; }
```
